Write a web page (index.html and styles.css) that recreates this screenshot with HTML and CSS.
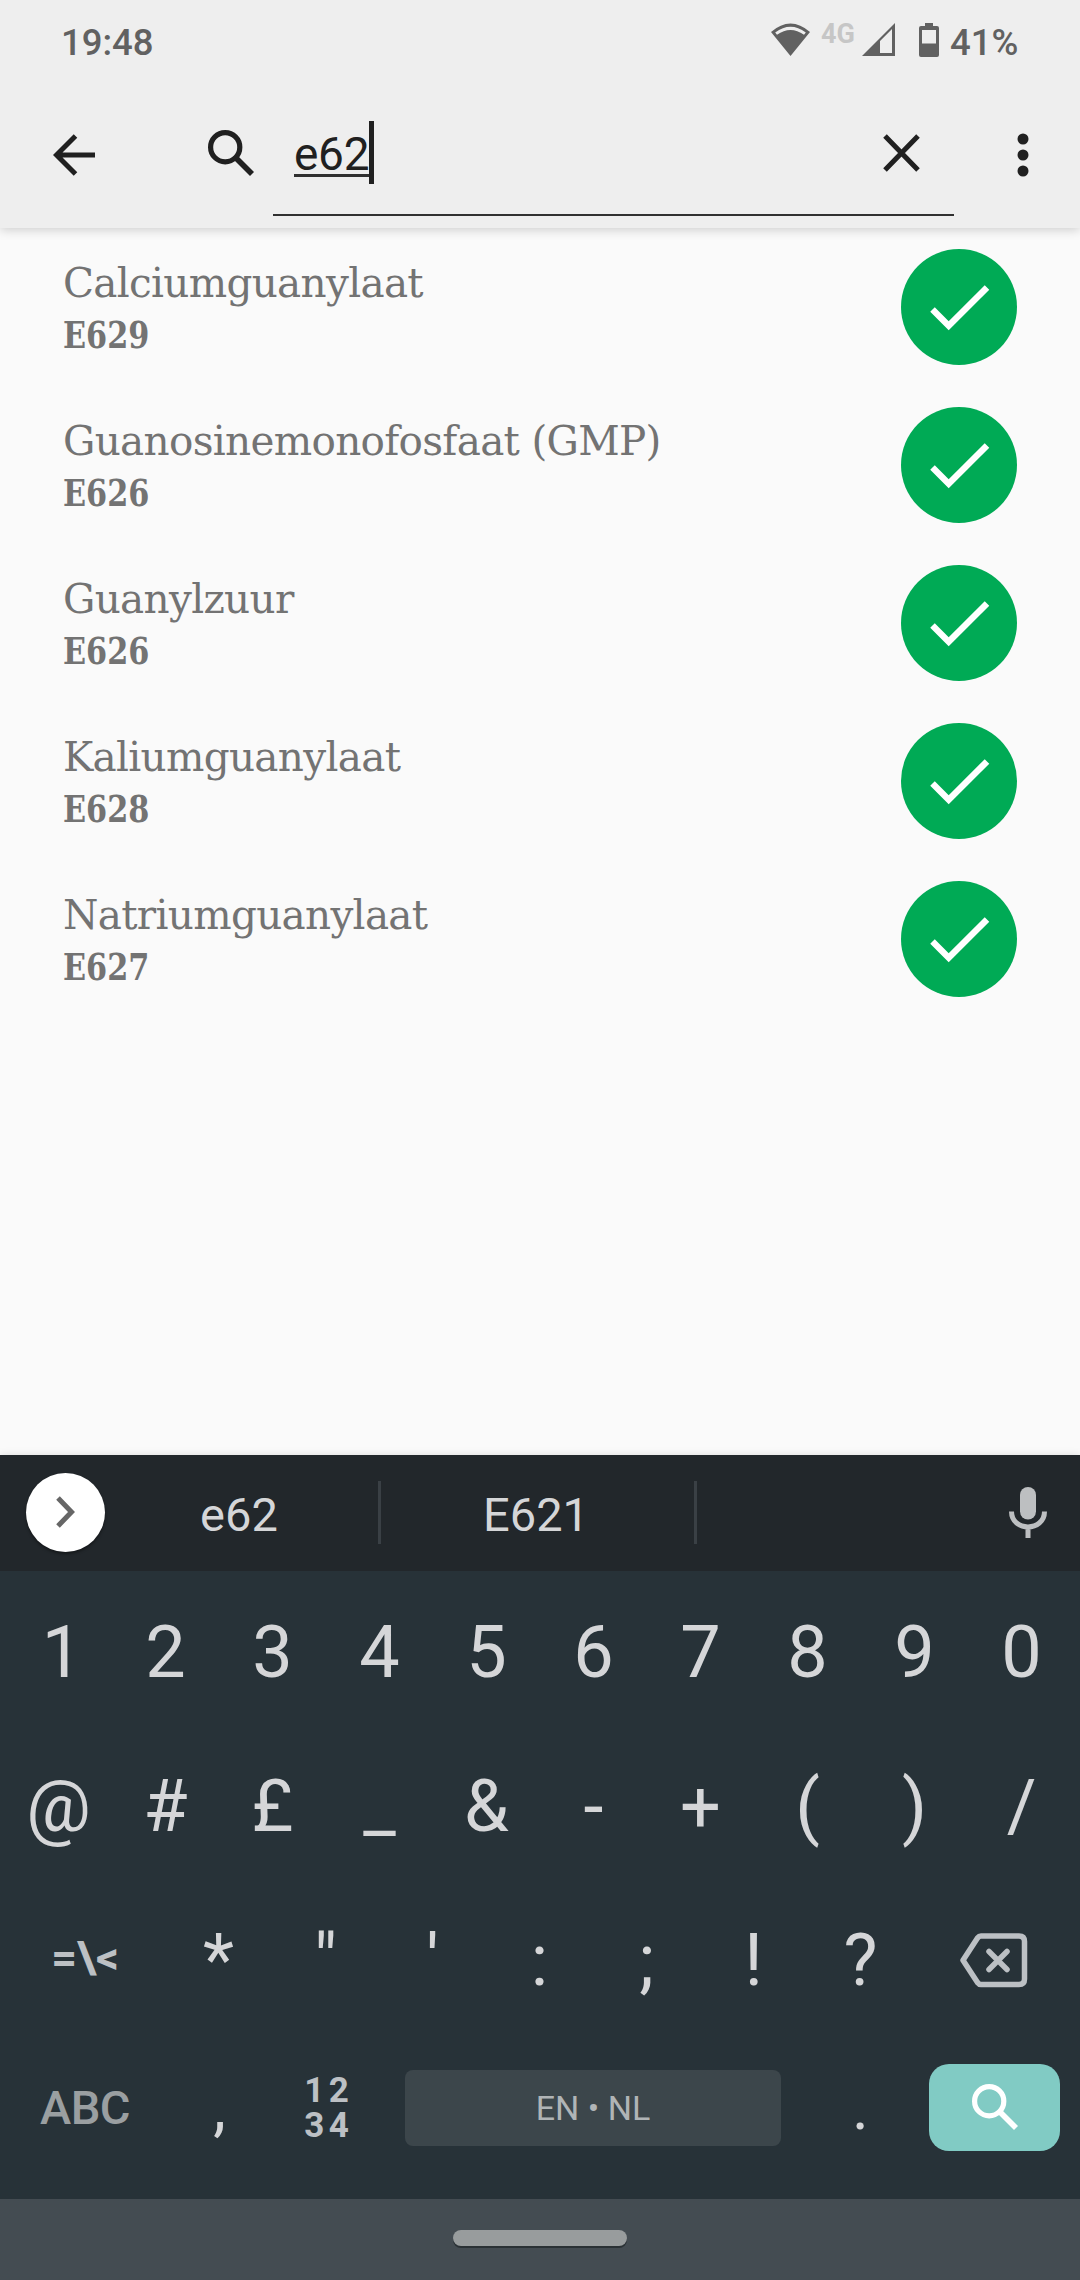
FILE: index.html
```html
<!DOCTYPE html>
<html lang="nl">
<head>
<meta charset="utf-8">
<title>E-nummers</title>
<link rel="stylesheet" href="styles.css">
</head>
<body>
<svg width="0" height="0" class="defs">
  <symbol id="search" viewBox="0 0 46 46"><circle cx="17.2" cy="17.2" r="14.6" fill="none" stroke="currentColor" stroke-width="5.2"/><path d="M28.5 28.500L44 44" fill="none" stroke="currentColor" stroke-width="5.6"/></symbol>
  <symbol id="check" viewBox="0 0 116 116"><circle cx="58" cy="58" r="58" fill="#00aa55"/><path d="M31.500 60.500L47.700 76.700L86 38.400" fill="none" stroke="#fff" stroke-width="6.400"/></symbol>
</svg>
<div class="screen">
  <header class="top">
    <div class="status">
      <span class="clock">19:48</span>
      <svg class="wifi" width="40" height="33" viewBox="0 0 40 33"><path d="M0 9Q19.500-8 39 9L19.500 33ZM4.200 9.500L6 11.800Q19.500 2 33 11.800L34.800 9.500Q19.500-2 4.200 9.500Z" fill="#616161" fill-rule="evenodd"/></svg>
      <span class="net">4G</span>
      <svg class="signal" width="33" height="33" viewBox="0 0 33 33"><path d="M0 33L33 0V33ZM18 18V30H30V6Z" fill="#616161" fill-rule="evenodd"/></svg>
      <svg class="battery" width="20" height="34" viewBox="0 0 20 34"><path d="M6 0H14V3H18Q20 3 20 5V32Q20 34 18 34H2Q0 34 0 32V5Q0 3 2 3H6ZM3 7V20.500H17V7Z" fill="#616161" fill-rule="evenodd"/></svg>
      <span class="percent">41%</span>
    </div>
    <div class="toolbar">
      <svg class="back" width="42" height="42" viewBox="0 0 42 42"><path d="M42 21H4M22.500 2L3.500 21L22.500 40" fill="none" stroke="#202020" stroke-width="5"/></svg>
      <svg class="lens" width="46" height="46"><use href="#search"/></svg>
      <div class="field">
        <span class="query">e62</span><span class="cursor"></span>
        <svg class="clear" width="37" height="38" viewBox="0 0 37 38"><path d="M2 2L35 36M35 2L2 36" stroke="#202020" stroke-width="5"/></svg>
      </div>
      <svg class="more" width="12" height="44" viewBox="0 0 12 44" fill="#202020"><circle cx="6" cy="6" r="5.500"/><circle cx="6" cy="22" r="5.500"/><circle cx="6" cy="38" r="5.500"/></svg>
    </div>
  </header>
  <main class="list">
    <div class="item"><div class="label"><div class="name">Calciumguanylaat</div><div class="code">E629</div></div><svg width="116" height="116"><use href="#check"/></svg></div>
    <div class="item"><div class="label"><div class="name">Guanosinemonofosfaat (GMP)</div><div class="code">E626</div></div><svg width="116" height="116"><use href="#check"/></svg></div>
    <div class="item"><div class="label"><div class="name">Guanylzuur</div><div class="code">E626</div></div><svg width="116" height="116"><use href="#check"/></svg></div>
    <div class="item"><div class="label"><div class="name">Kaliumguanylaat</div><div class="code">E628</div></div><svg width="116" height="116"><use href="#check"/></svg></div>
    <div class="item"><div class="label"><div class="name">Natriumguanylaat</div><div class="code">E627</div></div><svg width="116" height="116"><use href="#check"/></svg></div>
  </main>
  <section class="keyboard">
    <div class="strip">
      <div class="expand"><svg width="19" height="32" viewBox="0 0 19 32"><path d="M2 2L15.500 16L2 30" fill="none" stroke="#666" stroke-width="5"/></svg></div>
      <span class="word first">e62</span>
      <span class="word second">E621</span>
      <svg class="mic" width="38" height="51" viewBox="0 0 38 51"><rect x="11" y="0" width="16" height="32.500" rx="8" fill="#bdbfc1"/><path d="M2.500 24.500C2.500 45 35.500 45 35.500 24.500M19 40V51" fill="none" stroke="#bdbfc1" stroke-width="5"/></svg>
    </div>
    <div class="keys">
      <div class="row"><b class="one">1</b><b>2</b><b>3</b><b>4</b><b>5</b><b>6</b><b>7</b><b>8</b><b>9</b><b>0</b></div>
      <div class="row second-row"><b>@</b><b>#</b><b>£</b><b>_</b><b>&amp;</b><b>-</b><b>+</b><b>(</b><b>)</b><b>/</b></div>
      <div class="row third"><span class="wide symbols">=\&lt;</span><b>*</b><b>"</b><b>'</b><b>:</b><b>;</b><b>!</b><b>?</b><span class="wide"><svg width="68" height="55" viewBox="0 0 68 55" fill="none" stroke="#bcc0c4" stroke-width="5.500" stroke-linejoin="round"><path d="M21 3H59Q64.500 3 64.500 8.500V46Q64.500 51.500 59 51.500H21Q19 51.500 17.500 49.500L3 27.200L17.500 5Q19 3 21 3Z"/><path d="M29 18.500L47 36.500M47 18.500L29 36.500" stroke-linecap="round"/></svg></span></div>
      <div class="row last"><span class="wide abc">ABC</span><b>,</b><span class="numpad"><i>1</i><i>2</i><i>3</i><i>4</i></span><span class="space">EN • NL</span><b>.</b><span class="enter"><svg width="46" height="46"><use href="#search"/></svg></span></div>
    </div>
    <div class="nav"><div class="pill"></div></div>
  </section>
</div>
</body>
</html>
```
FILE: styles.css
```css
* { box-sizing: border-box; }
body { margin: 0; background: #fafafa; font-family: Roboto, sans-serif; }
svg { display: block; flex: none; }
.defs { position: absolute; }
.screen { width: 1080px; height: 2280px; display: flex; flex-direction: column; overflow: hidden; background: #fafafa; }

.top { height: 228px; flex: none; background: #eee; box-shadow: 0 2px 10px rgba(0,0,0,.18); }
.status { height: 84px; display: flex; align-items: flex-start; padding-left: 61px; color: #616161; font-size: 36.500px; font-weight: 500; line-height: 44px; }
.clock { width: 710px; padding-top: 21px; }
.wifi { margin-top: 23px; }
.net { width: 51px; padding: 18px 0 0 10px; font-size: 27px; font-weight: 700; line-height: 32px; color: #c6c6c6; white-space: nowrap; }
.signal { margin-top: 23px; }
.battery { margin: 23px 0 0 24px; }
.percent { padding: 21px 0 0 11px; }
.toolbar { height: 144px; display: flex; align-items: flex-start; padding-left: 53px; }
.back { margin-top: 50px; }
.lens { margin: 46px 0 0 113px; color: #202020; }
.field { width: 681px; height: 132px; margin-left: 19px; padding-left: 21px; border-bottom: 2px solid #303030; display: flex; align-items: flex-start; }
.query { height: 55px; margin-top: 38px; padding-top: 5px; width: 75px; font-family: "Roboto Slab", Roboto, sans-serif; font-size: 46px; line-height: 54px; color: #202020; border-bottom: 3px solid #303030; letter-spacing: -.3px; }
.cursor { width: 5px; height: 63px; margin-top: 37px; background: #202020; }
.clear { margin: 50px 0 0 509px; }
.more { margin: 49px 0 0 63px; }

.list { flex: 1; padding: 21px 63px 0 62px; display: flex; flex-direction: column; gap: 42px; }
.item { height: 116px; display: flex; justify-content: space-between; }
.label { font-family: "Roboto Slab", "DejaVu Serif", serif; color: #737373; white-space: nowrap; }
.name { font-size: 40.500px; line-height: 56px; margin-top: 6px; letter-spacing: -.68px; padding-left: 1px; }
.code { font-size: 37px; line-height: 44px; margin: 2px 0 0 1px; font-weight: 700; font-family: "Roboto Slab", "DejaVu Serif Condensed", "DejaVu Serif", serif; font-stretch: condensed; transform: scaleX(.91); transform-origin: left; }

.keyboard { height: 825px; flex: none; background: #273238; color: #d5d6d8; box-shadow: 0 0 8px rgba(0,0,0,.12); }
.strip { height: 116px; display: flex; align-items: flex-start; padding-left: 26px; background: #22272b; }
.expand { width: 79px; height: 79px; margin-top: 18px; border-radius: 50%; background: #fff; display: flex; align-items: center; justify-content: center; padding-bottom: 2px; box-shadow: 0 2px 3px rgba(0,0,0,.4); }
.word { height: 63px; margin-top: 26px; border-right: 3px solid #3a4045; font-size: 47px; line-height: 67px; text-align: center; }
.first { width: 276px; padding-right: 5px; }
.second { width: 316px; padding-right: 3px; }
.mic { margin: 32px 0 0 312px; }
.keys { height: 628px; padding: 5px 5px 0; }
.row { height: 154.500px; display: flex; align-items: center; }
.row b { width: 107px; flex: none; text-align: center; font-size: 72px; line-height: 84px; font-weight: 400; }
.row .one { padding-left: 7px; }
.second-row { padding-bottom: 2px; }
.third { padding-bottom: 3px; }
.wide { width: 160px; display: flex; align-items: center; justify-content: center; }
.symbols { font-size: 45px; font-weight: 700; color: #bcc0c4; padding-bottom: 7px; }
.abc { font-size: 47px; font-weight: 500; color: #9a9fa1; letter-spacing: -.5px; }
.last { padding-bottom: 18px; }
.last b { font-size: 64px; }
.last b:nth-child(2) { padding-left: 2px; }
.numpad { width: 107px; padding: 0 28px 0 30px; display: grid; grid-template-columns: 1fr 1fr; line-height: 35px; font-size: 35px; font-weight: 700; text-align: center; color: #bcc0c4; }
.numpad i { font-style: normal; }
.space { width: 376px; height: 76px; margin: 0 26px 0 26px; border-radius: 8px; background: #3c464b; display: flex; align-items: center; justify-content: center; color: #b0b4b6; font-size: 34px; }
.enter { width: 131px; height: 87px; margin-left: 15px; border-radius: 20px; background: #81cbc4; color: #fff; display: flex; align-items: center; justify-content: center; padding-bottom: 2px; }
.nav { height: 81px; padding-top: 31px; background: #444c52; }
.pill { width: 174px; height: 16px; margin: 0 auto; border-radius: 8px; background: #989c9d; box-shadow: 0 2px 0 #2a3135; }
```
